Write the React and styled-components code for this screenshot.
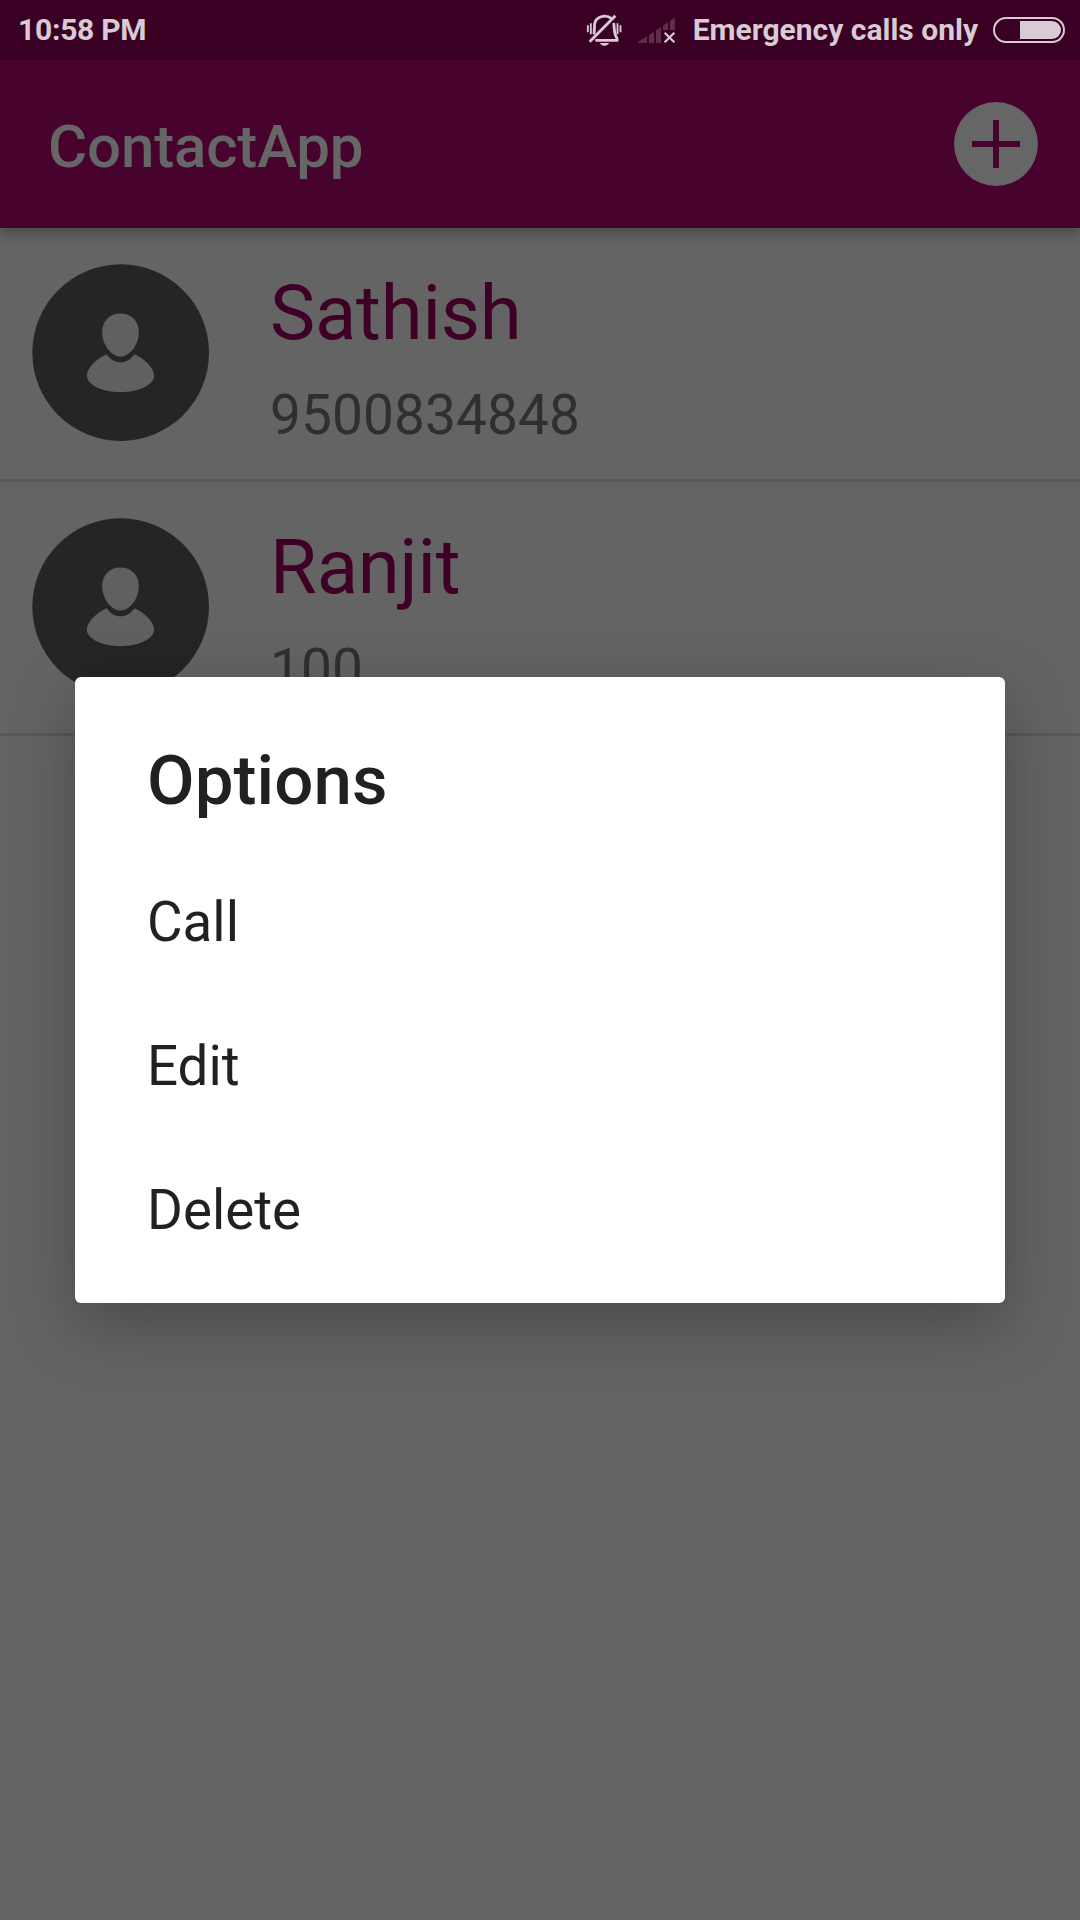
import React from "react";
import styled, { createGlobalStyle } from "styled-components";

const GlobalStyle = createGlobalStyle`
  *, *::before, *::after { box-sizing: border-box; }
  html, body { margin: 0; padding: 0; background: #646464; }
  body { font-family: Roboto, "Noto Sans", sans-serif; }
`;

const Screen = styled.div`
  position: relative;
  display: flex;
  flex-direction: column;
  width: 1080px;
  height: 1920px;
  overflow: hidden;
  background: #646464;
`;

const StatusBar = styled.header`
  display: flex;
  align-items: center;
  flex: none;
  height: 60px;
  padding: 0 15px 0 18px;
  background: #3a0024;
  color: #d8cbd3;
`;

const StatusText = styled.span`
  font-size: 30px;
  line-height: 60px;
  font-weight: 700;
  letter-spacing: ${(p) => p.$spacing || "0"};
  white-space: nowrap;
`;

const StatusIcons = styled.div`
  display: flex;
  align-items: center;
  margin-left: auto;
`;

const BellIcon = styled.svg`
  width: 36px;
  height: 34px;
  margin-right: 16px;
`;

const SignalIcon = styled.svg`
  width: 38px;
  height: 27px;
  margin-right: 17px;
`;

const Battery = styled.div`
  display: flex;
  justify-content: flex-end;
  width: 72px;
  height: 26px;
  margin-left: 15px;
  padding: 2px;
  border: 2px solid #d8cbd3;
  border-radius: 13px;
`;

const BatteryLevel = styled.div`
  width: 41px;
  height: 18px;
  border-radius: 0 9px 9px 0;
  background: #d8cbd3;
`;

const AppBar = styled.div`
  position: relative;
  display: flex;
  align-items: center;
  justify-content: space-between;
  flex: none;
  height: 168px;
  padding: 0 42px 0 48px;
  background: #47022d;
  box-shadow: 0 5px 13px rgba(0, 0, 0, 0.3);
`;

const AppTitle = styled.h1`
  margin: 0;
  padding-top: 6px;
  font-size: 60px;
  line-height: 72px;
  font-weight: 500;
  letter-spacing: -0.15px;
  color: #666666;
`;

const AddButton = styled.button`
  display: flex;
  width: 84px;
  height: 84px;
  padding: 0;
  border: 0;
  border-radius: 50%;
  background: #666666;
`;

const ContactList = styled.ul`
  margin: 0;
  padding: 0;
  list-style: none;
`;

const ContactRow = styled.li`
  display: flex;
  align-items: flex-start;
  height: 254px;
  padding: 36px 32px 0;
  border-bottom: 3px solid #585858;
`;

const Avatar = styled.svg`
  flex: none;
  width: 178px;
  height: 178px;
  margin-right: 60px;
`;

const ContactText = styled.div`
  display: flex;
  flex-direction: column;
  gap: 25px;
  padding-top: 5px;
`;

const ContactName = styled.span`
  font-size: 76px;
  line-height: 88px;
  letter-spacing: -0.2px;
  color: #3e0026;
`;

const ContactNumber = styled.span`
  font-size: 55px;
  line-height: 66px;
  letter-spacing: 0.1px;
  color: #2f2f2f;
`;

const Scrim = styled.div`
  position: absolute;
  inset: 60px 0 0;
  display: flex;
  align-items: center;
  justify-content: center;
`;

const Dialog = styled.section`
  width: 930px;
  height: 626px;
  border-radius: 6px;
  background: #ffffff;
  box-shadow: 0 22px 66px rgba(0, 0, 0, 0.27);
`;

const DialogTitle = styled.h2`
  margin: 0;
  padding: 64px 72px 29px;
  font-size: 69px;
  line-height: 80px;
  font-weight: 500;
  letter-spacing: 0.1px;
  color: #212121;
`;

const OptionList = styled.ul`
  margin: 0;
  padding: 0;
  list-style: none;
`;

const Option = styled.li`
  height: 144px;
  padding: 0 72px;
  font-size: 54.700px;
  line-height: 144px;
  color: #212121;
`;

const contacts = [
  { name: "Sathish", number: "9500834848" },
  { name: "Ranjit", number: "100" },
];

const options = ["Call", "Edit", "Delete"];

function SilentBell() {
  return (
    <BellIcon viewBox="48 36 108 102" fill="none" stroke="#d8cbd3">
      <path d="M72 100C75 72 70 64 81 54C92 44 112 42 124 52" strokeWidth="8.500" />
      <path d="M131 66C134 82 131 98 141 112V118H76" strokeWidth="8.500" />
      <path d="M59 122L136 44" strokeWidth="8.500" />
      <path d="M89 126H118Q112 135 103.500 135Q95 135 89 126Z" fill="#d8cbd3" stroke="none" />
      <path d="M53.500 73V94M62.500 67V100M142.500 67V100M151.500 73V94" strokeWidth="5.500" />
    </BellIcon>
  );
}

function NoSignal() {
  return (
    <SignalIcon viewBox="204 51 114 81">
      <path
        fill="#5e2d4c"
        d="M204 129V126L231 109V129ZM237 129V105L252 95V129ZM258 129V91L273 81V129ZM279 90V77L294 67V90ZM300 90V63L315 53V90Z"
      />
      <path d="M284 98L313 127M313 98L284 127" stroke="#d8cbd3" strokeWidth="6.500" />
    </SignalIcon>
  );
}

function PersonAvatar() {
  return (
    <Avatar viewBox="96.500 131.500 534 534">
      <circle cx="362.500" cy="397.500" r="265" fill="#252525" />
      <path
        fill="#606060"
        d="M362 280C395 280 417 303 417 336C417 374 389 409 362 409C335 409 307 374 307 336C307 303 329 280 362 280Z"
      />
      <path
        fill="#606060"
        d="M321 402C332 418 345 426 362 426C379 426 392 418 404 402C436 415 463 446 463 466C463 494 417 516 362 516C307 516 261 494 261 466C261 446 288 415 321 402Z"
      />
    </Avatar>
  );
}

export default function App() {
  return (
    <>
      <GlobalStyle />
      <Screen>
        <StatusBar>
          <StatusText $spacing="-0.25px">10:58 PM</StatusText>
          <StatusIcons>
            <SilentBell />
            <NoSignal />
            <StatusText>Emergency calls only</StatusText>
            <Battery>
              <BatteryLevel />
            </Battery>
          </StatusIcons>
        </StatusBar>
        <AppBar>
          <AppTitle>ContactApp</AppTitle>
          <AddButton aria-label="Add contact">
            <svg width="84" height="84" viewBox="0 0 84 84">
              <path d="M42 18V66M18 42H66" stroke="#47022d" strokeWidth="6" />
            </svg>
          </AddButton>
        </AppBar>
        <ContactList>
          {contacts.map((c) => (
            <ContactRow key={c.name}>
              <PersonAvatar />
              <ContactText>
                <ContactName>{c.name}</ContactName>
                <ContactNumber>{c.number}</ContactNumber>
              </ContactText>
            </ContactRow>
          ))}
        </ContactList>
        <Scrim>
          <Dialog role="dialog" aria-label="Options">
            <DialogTitle>Options</DialogTitle>
            <OptionList>
              {options.map((o) => (
                <Option key={o}>{o}</Option>
              ))}
            </OptionList>
          </Dialog>
        </Scrim>
      </Screen>
    </>
  );
}
